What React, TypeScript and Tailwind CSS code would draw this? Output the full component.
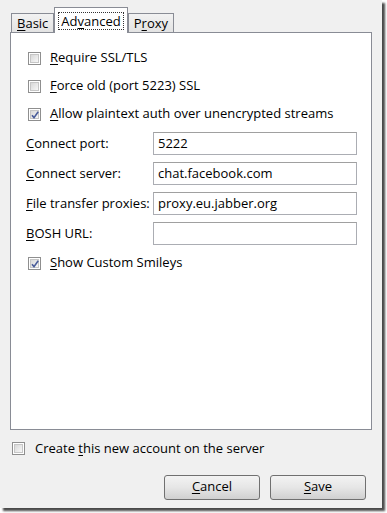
import type { ReactNode } from 'react';

const font = { fontFamily: '"Open Sans", "Noto Sans", sans-serif' };

function Key({ children }: { children: ReactNode }) {
    return <span className="underline underline-offset-2 decoration-1">{children}</span>;
}

function CheckBox({ checked }: { checked?: boolean }) {
    return (
        <span className="relative flex h-[13px] w-[13px] shrink-0 items-center justify-center border border-[#8f8f8f] bg-white">
            <span className="h-[9px] w-[9px] border border-[#c6c6c6] bg-gradient-to-br from-[#d8d8d8] to-[#f7f7f7]" />
            {checked && (
                <svg className="absolute left-[1px] top-[1px]" width="10" height="10" viewBox="0 0 10 10">
                    <path d="M2 5.2 L4 7.6 L8.2 1.8" fill="none" stroke="#4a5d9a" strokeWidth="1.6" />
                </svg>
            )}
        </span>
    );
}

function CheckRow({ checked, children }: { checked?: boolean; children: ReactNode }) {
    return (
        <div className="flex h-[28px] items-center gap-[9px]">
            <CheckBox checked={checked} />
            <span>{children}</span>
        </div>
    );
}

function Field({ label, value }: { label: ReactNode; value: string }) {
    return (
        <div className="flex items-center">
            <span className="w-[127px] whitespace-nowrap">{label}</span>
            <div className="flex h-[23px] w-[204px] items-center border border-[#abadb3] border-t-[#a0a0a0] bg-white px-[4px]">
                {value}
            </div>
        </div>
    );
}

function Tab({ active, children }: { active?: boolean; children: ReactNode }) {
    if (active) {
        return (
            <div className="relative z-10 -mb-px flex h-[26px] items-center border border-b-0 border-[#898c95] bg-white px-[3px]">
                <span className="border border-dotted border-[#333] px-[2px] leading-[16px]">{children}</span>
            </div>
        );
    }
    return (
        <div className="flex h-[19px] items-center border border-b-0 border-[#898c95] bg-gradient-to-b from-[#f2f2f2] to-[#e3e3e3] px-[5px] leading-[16px]">
            {children}
        </div>
    );
}

function Button({ children }: { children: ReactNode }) {
    return (
        <div className="flex h-[25px] w-[96px] items-center justify-center rounded-[3px] border border-[#707070] bg-gradient-to-b from-[#f3f3f3] via-[#e6e6e6] to-[#d0d0d0]">
            {children}
        </div>
    );
}

export default function App() {
    return (
        <div className="h-[513px] w-[387px] bg-white" style={font}>
            <div className="flex h-[508px] w-[382px] flex-col bg-[#f0f0f0] pl-[10px] pr-[10px] pt-[7px] text-[13px] text-black shadow-[3px_3px_2px_#4a4a4a]">
                {/* Tabs */}
                <div className="flex items-end pl-[1px]">
                    <Tab><Key>B</Key>asic</Tab>
                    <Tab active>Ad<Key>v</Key>anced</Tab>
                    <Tab>P<Key>r</Key>oxy</Tab>
                </div>

                {/* Panel */}
                <div className="h-[398px] w-[362px] border border-[#898c95] bg-white pl-[15px] pt-[11px]">
                    <div className="pl-[2px]">
                        <CheckRow><Key>R</Key>equire SSL/TLS</CheckRow>
                        <CheckRow><Key>F</Key>orce old (port 5223) SSL</CheckRow>
                        <CheckRow checked><Key>A</Key>llow plaintext auth over unencrypted streams</CheckRow>
                    </div>
                    <div className="mt-[4px] flex flex-col gap-[7px]">
                        <Field label={<><Key>C</Key>onnect port:</>} value="5222" />
                        <Field label={<><Key>C</Key>onnect server:</>} value="chat.facebook.com" />
                        <Field label={<><Key>F</Key>ile transfer proxies:</>} value="proxy.eu.jabber.org" />
                        <Field label={<><Key>B</Key>OSH URL:</>} value="" />
                    </div>
                    <div className="mt-[4px] pl-[2px]">
                        <CheckRow checked><Key>S</Key>how Custom Smileys</CheckRow>
                    </div>
                </div>

                {/* Footer */}
                <div className="mt-[9px] flex items-center gap-[10px] pl-[2px]">
                    <CheckBox />
                    <span>Create <Key>t</Key>his new account on the server</span>
                </div>
                <div className="mt-[16px] flex justify-end gap-[10px] pr-[6px]">
                    <Button><Key>C</Key>ancel</Button>
                    <Button><Key>S</Key>ave</Button>
                </div>
            </div>
        </div>
    );
}
